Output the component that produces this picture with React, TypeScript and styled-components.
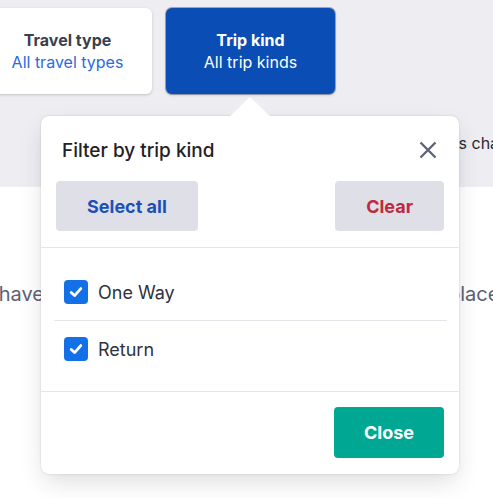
import React from "react";
import styled, { createGlobalStyle } from "styled-components";

const GlobalStyle = createGlobalStyle`
  html {
    overflow: hidden;
  }

  body {
    margin: 0;
    min-height: 100vh;
    background: #fff;
    font-family: Inter, "Noto Sans", sans-serif;
    color: #252a31;
  }
`;

type Option = {
  id: string;
  label: string;
};

const tripKinds: Option[] = [
  { id: "one-way", label: "One Way" },
  { id: "return", label: "Return" },
];

function CloseIcon() {
  return (
    <svg width="18" height="18" viewBox="0 0 18 18">
      <path
        d="M1.5 1.5 L16.5 16.5 M16.5 1.5 L1.5 16.5"
        stroke="#5f6478"
        strokeWidth="2.4"
        fill="none"
      />
    </svg>
  );
}

function CheckIcon() {
  return (
    <svg width="14" height="14" viewBox="0 0 14 14">
      <path
        d="M2.2 7.4 L5.6 10.6 L11.8 3.6"
        stroke="#fff"
        strokeWidth="2.8"
        strokeLinecap="round"
        strokeLinejoin="round"
        fill="none"
      />
    </svg>
  );
}

function TripKindPopover() {
  const [selected, setSelected] = React.useState<string[]>(
    tripKinds.map((t) => t.id)
  );

  const toggle = (id: string) =>
    setSelected((prev) =>
      prev.includes(id) ? prev.filter((p) => p !== id) : [...prev, id]
    );

  return (
    <Popover.Box>
      <Popover.Arrow />
      <Popover.Header>
        <Popover.Title>Filter by trip kind</Popover.Title>
        <Popover.IconButton aria-label="Close">
          <CloseIcon />
        </Popover.IconButton>
      </Popover.Header>
      <Popover.Actions>
        <Action.Button
          $tone="blue"
          onClick={() => setSelected(tripKinds.map((t) => t.id))}
        >
          Select all
        </Action.Button>
        <Action.Button $tone="red" onClick={() => setSelected([])}>
          Clear
        </Action.Button>
      </Popover.Actions>
      <Popover.List>
        {tripKinds.map((kind) => (
          <Choice.Row key={kind.id} onClick={() => toggle(kind.id)}>
            <Choice.Box $checked={selected.includes(kind.id)}>
              {selected.includes(kind.id) && <CheckIcon />}
            </Choice.Box>
            <Choice.Label>{kind.label}</Choice.Label>
          </Choice.Row>
        ))}
      </Popover.List>
      <Popover.Footer>
        <Action.Primary>Close</Action.Primary>
      </Popover.Footer>
    </Popover.Box>
  );
}

function App() {
  return (
    <>
      <GlobalStyle />
      <Page.Band>
        <Cards.Row>
          <Cards.Card>
            <Cards.Title>Travel type</Cards.Title>
            <Cards.Value>All travel types</Cards.Value>
          </Cards.Card>
          <Cards.Anchor>
            <Cards.Card $active>
              <Cards.Title $active>Trip kind</Cards.Title>
              <Cards.Value $active>All trip kinds</Cards.Value>
            </Cards.Card>
            <TripKindPopover />
          </Cards.Anchor>
        </Cards.Row>
        <Page.Hint>
          <Page.HintLead>Your selected filters</Page.HintLead>
          <span>&nbsp;change the results</span>
        </Page.Hint>
      </Page.Band>
      <Page.Notice>
        <Page.NoticeLead>Looks like you don't have</Page.NoticeLead>
        <span>any upcoming trips for this</span>
        <span>place yet</span>
      </Page.Notice>
    </>
  );
}

const Page = {
  Band: styled.div`
    height: 187px;
    padding-top: 8px;
    box-sizing: border-box;

    background-color: #ededf2;
  `,
  Hint: styled.div`
    display: grid;
    grid-template-columns: 467px auto;
    margin-top: 37px;

    font-size: 16px;
    line-height: 24px;
    white-space: nowrap;
    color: #252a31;
  `,
  HintLead: styled.span`
    display: flex;
    justify-content: flex-end;
  `,
  Notice: styled.div`
    display: grid;
    grid-template-columns: 44px 404px auto;
    margin-top: 93px;

    font-size: 20px;
    line-height: 28px;
    white-space: nowrap;
    color: #5b6175;
  `,
  NoticeLead: styled.span`
    display: flex;
    justify-content: flex-end;
  `,
};

const Cards = {
  Row: styled.div`
    display: flex;
    gap: 14px;
    margin-left: -17px;
  `,
  Anchor: styled.div`
    position: relative;
    z-index: 2;
  `,
  Card: styled.div<{ $active?: boolean }>`
    width: 169px;
    height: 86px;

    display: flex;
    flex-direction: column;
    justify-content: center;
    align-items: center;
    box-sizing: border-box;

    background-color: ${(p) => (p.$active ? "#0a4db4" : "#fff")};
    border-radius: 6px;
    box-shadow: ${(p) =>
      p.$active
        ? "0 0 0 1px rgba(30, 40, 70, 0.35), 0 1px 3px rgba(0, 0, 0, 0.2)"
        : "0 1px 3px rgba(37, 42, 49, 0.22)"};
  `,
  Title: styled.div<{ $active?: boolean }>`
    font-size: 16px;
    line-height: 22px;
    font-weight: 700;
    color: ${(p) => (p.$active ? "#fff" : "#3b3f4c")};
  `,
  Value: styled.div<{ $active?: boolean }>`
    font-size: 16px;
    line-height: 22px;
    color: ${(p) => (p.$active ? "#fff" : "#2a6be0")};
  `,
};

const Popover = {
  Box: styled.div`
    position: absolute;
    top: calc(100% + 22px);
    left: -125px;

    width: 418px;

    background-color: #fff;
    border-radius: 8px;
    box-shadow: 0 0 2px rgba(37, 42, 49, 0.2),
      0 10px 24px -4px rgba(37, 42, 49, 0.18);
  `,
  Arrow: styled.div`
    position: absolute;
    top: -19px;
    left: 189px;

    width: 0;
    height: 0;

    border-left: 20px solid transparent;
    border-right: 20px solid transparent;
    border-bottom: 19px solid #fff;
  `,
  Header: styled.div`
    display: flex;
    justify-content: space-between;
    align-items: center;
    padding: 23px 22px 0 21px;
  `,
  Title: styled.h3`
    margin: 0;

    font-size: 19px;
    line-height: 24px;
    font-weight: 500;
    color: #1f2127;
  `,
  IconButton: styled.button`
    display: flex;
    padding: 0;
    margin-top: -2px;

    background: none;
    border: none;
    cursor: pointer;
  `,
  Actions: styled.div`
    display: flex;
    justify-content: space-between;
    padding: 18px 15px 16px;
    border-bottom: 1px solid #e4e4eb;
  `,
  List: styled.div`
    padding: 16px 12px 14px 13px;
    border-bottom: 1px solid #e4e4eb;
  `,
  Footer: styled.div`
    display: flex;
    justify-content: flex-end;
    padding: 15px 15px 16px;
  `,
};

const Action = {
  Button: styled.button<{ $tone: "blue" | "red" }>`
    height: 50px;
    padding: 0 31px;

    font-family: inherit;
    font-size: 18px;
    font-weight: 700;
    color: ${(p) => (p.$tone === "blue" ? "#1a50b9" : "#c0293f")};

    background-color: #dfe0e7;
    border: none;
    border-radius: 4px;
    cursor: pointer;
  `,
  Primary: styled.button`
    height: 51px;
    width: 110px;

    font-family: inherit;
    font-size: 18px;
    font-weight: 700;
    color: #fff;

    background-color: #00a793;
    border: none;
    border-radius: 4px;
    cursor: pointer;
  `,
};

const Choice = {
  Row: styled.label`
    display: flex;
    align-items: center;
    gap: 10px;
    height: 56px;
    padding: 0 10px;
    cursor: pointer;

    &:not(:last-child) {
      border-bottom: 1px solid #e4e4eb;
    }
  `,
  Box: styled.span<{ $checked: boolean }>`
    width: 24px;
    height: 24px;

    display: flex;
    justify-content: center;
    align-items: center;
    box-sizing: border-box;

    background-color: ${(p) => (p.$checked ? "#1470e6" : "#fff")};
    border: ${(p) => (p.$checked ? "none" : "1px solid #bac7d5")};
    border-radius: 4px;
  `,
  Label: styled.span`
    font-size: 18px;
    color: #2f3340;
  `,
};

export default App;
